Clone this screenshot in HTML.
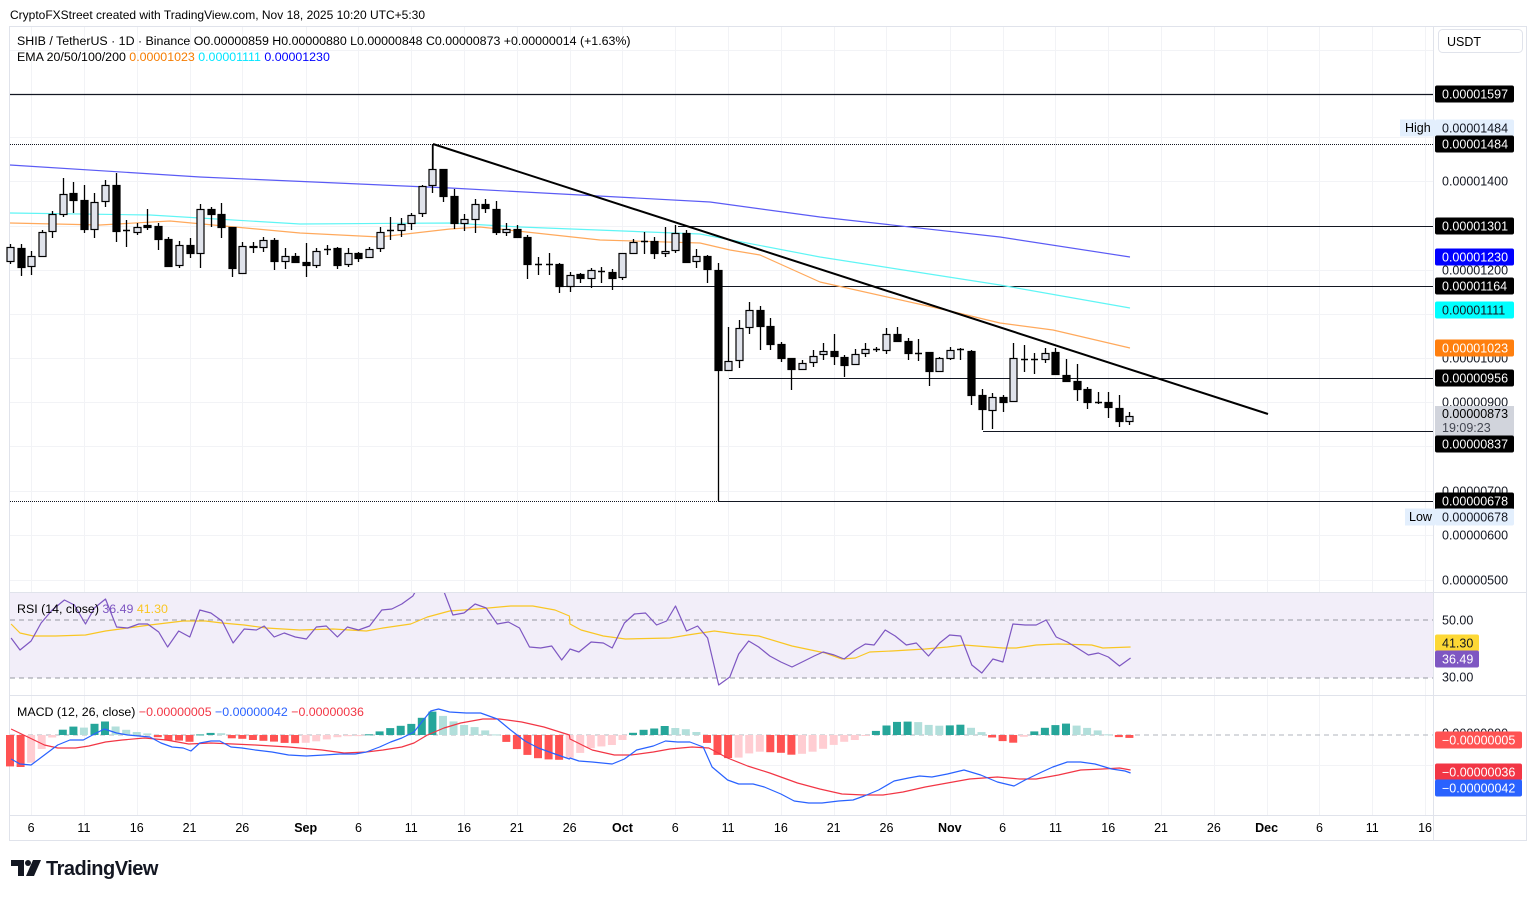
<!DOCTYPE html>
<html><head><meta charset="utf-8">
<style>
html,body{margin:0;padding:0;background:#fff;}
body{width:1536px;height:897px;overflow:hidden;position:relative;font-family:"Liberation Sans",sans-serif;color:#131722;}
svg{position:absolute;left:0;top:0;}
text{font-family:"Liberation Sans",sans-serif;}
</style></head><body>
<svg id="s" width="1536" height="897" viewBox="0 0 1536 897" xmlns="http://www.w3.org/2000/svg">
<rect x="9.5" y="26.5" width="1517" height="814" fill="#fff" stroke="#e0e3eb"/>
<g id="grid"></g>
<rect x="10" y="593" width="1423" height="85" fill="#f2eef9"/>
<line x1="10" y1="620" x2="1433" y2="620" stroke="#9598a1" stroke-dasharray="5,4"/>
<line x1="10" y1="678" x2="1433" y2="678" stroke="#9598a1" stroke-dasharray="5,4"/>
<line x1="10" y1="735" x2="1433" y2="735" stroke="#b2b5be" stroke-dasharray="5,4"/>
<line x1="10" y1="592.5" x2="1526" y2="592.5" stroke="#e0e3eb"/>
<line x1="10" y1="695.5" x2="1526" y2="695.5" stroke="#e0e3eb"/>
<line x1="10" y1="815.5" x2="1526" y2="815.5" stroke="#e0e3eb"/>
<line x1="1433.5" y1="26" x2="1433.5" y2="841" stroke="#e0e3eb"/>
<g id="lines"></g>
<g id="candles"></g>
<g id="ind"></g>
<text x="10" y="19" font-size="12">CryptoFXStreet created with TradingView.com, Nov 18, 2025 10:20 UTC+5:30</text>
<text x="17" y="45" font-size="12.4">SHIB / TetherUS · 1D · Binance  O0.00000859  H0.00000880  L0.00000848  C0.00000873  +0.00000014 (+1.63%)</text>
<text x="17" y="61" font-size="12.4">EMA 20/50/100/200 <tspan fill="#f57c00">0.00001023</tspan> <tspan fill="#00e5ff">0.00001111</tspan> <tspan fill="#0000ff">0.00001230</tspan></text>
<text x="17" y="613" font-size="12.4">RSI (14, close) <tspan fill="#7e57c2">36.49</tspan> <tspan fill="#f9c623">41.30</tspan></text>
<text x="17" y="716" font-size="12.4">MACD (12, 26, close) <tspan fill="#f23645">−0.00000005</tspan> <tspan fill="#2962ff">−0.00000042</tspan> <tspan fill="#f23645">−0.00000036</tspan></text>
<rect x="1438.5" y="29.5" width="84" height="23" rx="4" fill="#fff" stroke="#e0e3eb"/>
<text x="1447" y="46" font-size="12.5">USDT</text>
<g id="axis" font-size="12.5"></g>
<g id="dates" font-size="12.5" text-anchor="middle"></g>
<g transform="translate(11,860)">
<path d="M0 0h13v16h-6v-10h-7z" fill="#131722"/>
<circle cx="17" cy="3" r="3" fill="#131722"/>
<path d="M22 0h8l-7 16h-8z" fill="#131722"/>
</g>
<text x="46" y="875" font-size="20" font-weight="bold" fill="#131722" letter-spacing="-0.5">TradingView</text>
</svg>
<script>
var NS="http://www.w3.org/2000/svg";
function el(p,t,a,txt){var e=document.createElementNS(NS,t);for(var k in a)e.setAttribute(k,a[k]);if(txt!==undefined)e.textContent=txt;document.getElementById(p).appendChild(e);return e;}
function X(i){return 10+(i-1)*10.56;}
var hg=[181,226,270,314,358,402,446,491,535,580,137,94,50,650,765];
hg.forEach(function(y){el('grid','line',{x1:10,y1:y+.5,x2:1433,y2:y+.5,stroke:'#f2f3f6'});});
var dates=[[3,'6'],[8,'11'],[13,'16'],[18,'21'],[23,'26'],[29,'Sep',1],[34,'6'],[39,'11'],[44,'16'],[49,'21'],[54,'26'],[59,'Oct',1],[64,'6'],[69,'11'],[74,'16'],[79,'21'],[84,'26'],[90,'Nov',1],[95,'6'],[100,'11'],[105,'16'],[110,'21'],[115,'26'],[120,'Dec',1],[125,'6'],[130,'11'],[135,'16']];
dates.forEach(function(d){var x=Math.round(X(d[0]))+.5;el('grid','line',{x1:x,y1:27,x2:x,y2:815,stroke:'#f2f3f6'});
var a={x:X(d[0]),y:832};if(d[2])a['font-weight']='bold';el('dates','text',a,d[1]);});
var L=function(x1,y,x2,dash,w){var a={x1:x1,y1:y+.5,x2:x2,y2:y+.5,stroke:'#131722','stroke-width':w||1};if(dash)a['stroke-dasharray']=dash;el('lines','line',a);};
L(10,94,1433,null,1.3);L(10,144,1433,'1,1');L(678,226,1433);L(560,286,1433);L(729,378,1433);L(983,431,1433);L(10,501,1433,'1,1');L(718,501,1433);
function poly(g,pts,c,w){el(g,'polyline',{points:pts.map(function(p){return p.join(',')}).join(' '),fill:'none',stroke:c,'stroke-width':w||1.2,'stroke-linejoin':'round'});}
poly('lines',[[10,165],[200,177],[450,188],[710,202],[820,217],[1000,237],[1130,257]],'#5b5bf5');
poly('lines',[[10,213],[150,215],[300,224],[450,223],[520,227],[700,234],[820,257],[1000,285],[1130,308]],'#5ff5f5');
poly('lines',[[10,223],[100,225],[170,221],[300,233],[380,237],[450,229],[480,227],[600,240],[700,243],[730,250],[760,255],[820,282],[950,311],[1000,323],[1053,330],[1130,348]],'#ffa95c');
var C=[['w',247,261,244,264],['b',248,267,244,276],['w',256,266,251,275],['w',232,256,230,257],['w',214,231,211,238],['w',194,214,178,217],['b',193,200,182,213],['b',200,229,185,233],['w',202,229,193,238],['w',185,201,180,207],['b',185,231,173,242],['d',230,230,220,247],['w',227,232,223,235],['b',225,227,209,230],['b',226,239,223,250],['b',239,266,237,267],['w',245,265,241,268],['b',245,253,238,258],['w',209,253,204,268],['b',209,214,207,227],['b',214,227,203,238],['b',227,268,227,277],['w',246,273,242,274],['b',246,247,242,253],['w',240,247,237,252],['b',240,261,238,270],['w',256,261,248,269],['b',256,262,253,262],['b',262,265,243,277],['w',251,265,248,268],['d',249,249,245,255],['b',248,265,247,269],['w',253,264,248,267],['b',253,258,252,262],['w',249,257,247,258],['w',232,248,227,252],['d',230,230,217,240],['w',224,230,218,237],['w',215,223,213,230],['w',186,213,185,217],['w',169,185,144,193],['b',169,196,169,202],['b',196,223,189,229],['w',219,223,214,231],['w',204,219,199,233],['b',204,208,199,213],['b',209,232,201,235],['w',229,232,223,236],['b',229,237,225,237],['b',237,264,235,279],['d',264,264,257,275],['d',264,264,253,275],['b',264,286,263,293],['w',275,286,272,292],['b',274,278,273,283],['w',270,278,268,288],['d',271,271,267,283],['b',272,278,269,290],['w',253,277,253,280],['w',242,253,239,254],['d',241,241,232,254],['b',241,253,237,259],['w',251,253,227,257],['w',233,250,225,253],['b',233,262,230,262],['w',256,261,249,268],['b',256,269,255,283],['b',270,370,263,501],['w',361,370,327,370],['w',328,360,320,368],['w',310,327,302,334],['b',310,326,306,350],['b',326,344,318,350],['b',344,358,342,362],['b',358,369,358,390],['w',363,369,360,370],['w',356,362,350,367],['w',351,354,343,360],['b',351,356,334,365],['b',357,365,355,377],['w',354,364,349,365],['w',349,353,343,357],['d',349,349,347,352],['w',334,350,328,354],['b',334,341,327,342],['b',341,353,338,360],['d',353,353,339,361],['b',352,371,352,386],['w',358,371,357,372],['w',350,358,347,360],['d',349,349,348,360],['b',351,395,350,405],['b',395,409,389,430],['w',397,410,393,429],['b',397,402,395,412],['w',358,401,343,402],['d',359,359,345,372],['d',359,359,353,374],['w',353,359,348,363],['b',352,374,348,375],['b',375,381,359,382],['b',381,389,364,401],['b',389,402,387,409],['d',402,402,392,404],['b',402,407,392,418],['b',408,421,395,427],['w',416,421,412,425]];
C.forEach(function(c,i){var x=Math.round(X(i+1));
el('candles','line',{x1:x+.5,y1:c[3],x2:x+.5,y2:c[4],stroke:'#000','stroke-width':1.3});
if(c[0]=='d'){el('candles','line',{x1:x-3,y1:c[1]+.5,x2:x+4,y2:c[1]+.5,stroke:'#000','stroke-width':1.5});}
else el('candles','rect',{x:x-3,y:c[1]+.5,width:7,height:Math.max(1,c[2]-c[1]),fill:c[0]=='w'?'#e0e3eb':'#000',stroke:'#000','stroke-width':1.2});});
el('lines','line',{x1:433,y1:144,x2:1268,y2:414,stroke:'#000','stroke-width':2});
el('lines','line',{x1:433,y1:144,x2:433,y2:170,stroke:'#000','stroke-width':1.3});
function tx(pts,zoom8){return pts.filter(function(p){return zoom8||p[0]<=513;}).map(function(p){var x=zoom8?570+(p[0]-570)*1.11:p[0]*1.11;return [Math.min(x,1131).toFixed(1),p[1]];});}
var rsi1=[[10,638],[18,650],[28,641],[37,623],[47,610],[58,600],[67,605],[77,624],[85,608],[95,599],[105,627],[115,628],[125,624],[133,624],[143,632],[151,647],[161,631],[171,637],[180,610],[190,613],[200,621],[210,643],[220,629],[231,630],[238,626],[247,637],[256,633],[266,637],[276,639],[285,627],[294,626],[304,637],[313,627],[323,630],[333,626],[344,610],[353,609],[362,604],[372,596],[377,586],[398,586],[408,615],[418,613],[428,604],[438,608],[448,624],[458,622],[468,628],[477,647],[487,648],[497,646],[506,660],[513,650]];
var rsi2=[[570,649],[578,652],[589,642],[600,643],[608,648],[619,623],[628,614],[638,613],[648,625],[657,621],[665,606],[675,631],[685,626],[694,638],[704,685],[714,677],[722,654],[731,641],[740,647],[750,656],[760,662],[770,667],[781,661],[790,656],[798,652],[808,655],[817,659],[827,650],[836,644],[844,645],[854,630],[863,636],[873,645],[882,643],[893,656],[903,643],[912,635],[922,636],[932,665],[941,673],[951,659],[960,662],[969,624],[980,625],[990,625],[999,620],[1008,637],[1018,642],[1027,648],[1037,655],[1046,653],[1055,657],[1065,666],[1075,658]];
var ma1=[[10,624],[18,633],[30,636],[50,636],[77,635],[95,631],[115,628],[135,625],[165,621],[185,621],[200,623],[220,625],[240,628],[270,630],[300,629],[330,631],[345,628],[370,624],[385,617],[405,611],[430,609],[460,606],[480,606],[500,610],[513,616]];
var ma2=[[570,624],[580,630],[600,636],[620,639],[660,638],[676,635],[700,631],[720,634],[740,636],[770,646],[800,653],[815,659],[827,658],[840,652],[860,651],[890,649],[910,647],[925,645],[960,648],[972,648],[990,645],[1010,644],[1040,645],[1050,648],[1075,647]];
var cp=el('ind','clipPath',{id:'rc'});var r=document.createElementNS(NS,'rect');r.setAttribute('x',10);r.setAttribute('y',593);r.setAttribute('width',1423);r.setAttribute('height',102);cp.appendChild(r);
el('ind','g',{id:'rg','clip-path':'url(#rc)'});
poly('rg',tx(ma1).concat(tx(ma2,1)),'#f9c623',1.2);
poly('rg',tx(rsi1).concat(tx(rsi2,1)),'#7e57c2',1.2);
var b1=[[10,759],[18,764],[28,765],[40,755],[52,745],[63,740],[75,740],[85,734],[94,729],[105,733],[115,735],[125,736],[135,737],[145,743],[155,747],[165,748],[172,751],[180,743],[190,741],[198,741],[208,747],[218,748],[230,750],[245,752],[260,755],[276,756],[292,755],[306,754],[320,754],[330,752],[342,747],[352,742],[362,738],[373,732],[380,722],[388,711],[395,709],[405,712],[420,713],[433,713],[448,719],[460,730],[473,741],[485,748],[500,754],[513,759]];
var r1=[[10,729],[25,737],[40,745],[52,748],[68,748],[80,746],[95,742],[110,740],[130,738],[150,740],[170,744],[190,743],[210,744],[230,745],[260,747],[290,750],[310,753],[330,752],[345,750],[362,747],[373,743],[385,735],[400,728],[415,723],[435,719],[450,719],[470,722],[490,727],[513,735]];
var b2=[[570,758],[578,761],[590,762],[608,764],[619,759],[630,750],[645,746],[656,741],[667,742],[678,742],[690,747],[698,767],[712,780],[722,784],[735,784],[745,787],[760,794],[772,801],[785,803],[797,803],[812,801],[825,800],[835,796],[848,790],[862,781],[875,778],[885,776],[896,777],[910,774],[925,770],[940,775],[955,782],[970,786],[980,780],[995,772],[1005,767],[1018,762],[1030,762],[1043,764],[1058,769],[1070,771],[1075,773]];
var r2=[[570,739],[590,750],[610,755],[625,755],[645,752],[660,749],[680,747],[695,748],[712,758],[730,766],[750,773],[775,783],[795,789],[815,794],[835,795],[852,795],[870,792],[890,787],[910,783],[930,779],[955,777],[975,779],[990,779],[1010,775],[1030,770],[1050,769],[1065,768],[1075,770]];
var B=tx(b1).concat(tx(b2,1)),R=tx(r1).concat(tx(r2,1));
function interp(P,x){for(var i=1;i<P.length;i++){var a=+P[i-1][0],b=+P[i][0];if(x<=b){var t=(x-a)/(b-a||1);return P[i-1][1]+t*(P[i][1]-P[i-1][1]);}}return P[P.length-1][1];}
var prev=0;
for(var i=1;i<=107;i++){var x=X(i);var h=(interp(R,x)-interp(B,x))*1.05;var col;
if(h>=0)col=h>=prev?'#26a69a':'#b2dfdb';else col=h<=prev?'#ff5252':'#ffcdd2';prev=h;
var y=h>=0?735-h:735;el('ind','rect',{x:(x-4).toFixed(1),y:y.toFixed(1),width:8,height:Math.max(1,Math.abs(h)).toFixed(1),fill:col});}
poly('ind',R,'#f23645',1.2);
poly('ind',B,'#2962ff',1.2);
function lab(y,t,bg,fg,w){if(bg)el('axis','rect',{x:1435,y:y-8.5,width:w||79,height:17,rx:2,fill:bg});el('axis','text',{x:1442,y:y+4.5,fill:fg||'#131722'},t);}
[[181,'0.00001400'],[270,'0.00001200'],[358,'0.00001000'],[402,'0.00000900'],[491,'0.00000700'],[535,'0.00000600'],[580,'0.00000500'],[620,'50.00'],[677,'30.00'],[733,'0.00000000']].forEach(function(a){lab(a[0],a[1]);});
lab(94,'0.00001597','#000','#fff');
el('axis','rect',{x:1400,y:119.5,width:35,height:17,fill:'#e3effd'});el('axis','text',{x:1405,y:132},'High');
lab(128,'0.00001484','#e3effd');
lab(144,'0.00001484','#000','#fff');
lab(226,'0.00001301','#000','#fff');
lab(257,'0.00001230','#0000ff','#fff');
lab(286,'0.00001164','#000','#fff');
lab(310,'0.00001111','#00ffff','#131722');
lab(348,'0.00001023','#ff7f0e','#fff');
lab(378,'0.00000956','#000','#fff');
el('axis','rect',{x:1435,y:406,width:79,height:30,fill:'#d1d4dc'});
el('axis','text',{x:1442,y:418},'0.00000873');el('axis','text',{x:1442,y:432,fill:'#434651'},'19:09:23');
lab(444,'0.00000837','#000','#fff');
lab(501,'0.00000678','#000','#fff');
el('axis','rect',{x:1405,y:508.5,width:30,height:17,fill:'#e3effd'});el('axis','text',{x:1409,y:521},'Low');
lab(517,'0.00000678','#e3effd');
lab(643,'41.30','#fdd835','#131722',44);
lab(659,'36.49','#7e57c2','#fff',44);
lab(740,'−0.00000005','#ff5252','#fff',87);
lab(772,'−0.00000036','#f23645','#fff',87);
lab(788,'−0.00000042','#2962ff','#fff',87);
</script>
</body></html>
